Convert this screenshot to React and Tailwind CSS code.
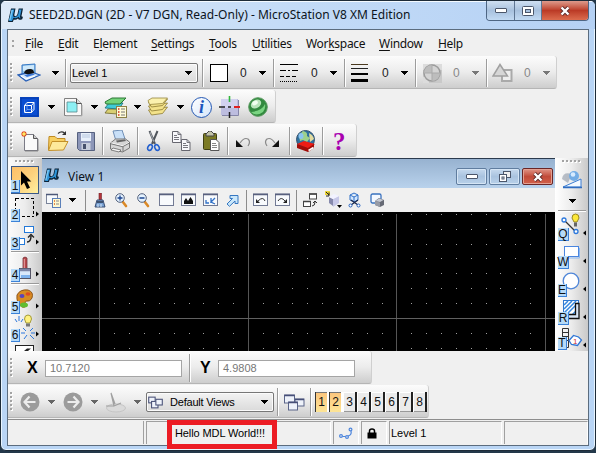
import React from "react";

/* ---------- shared toolbar parts ---------- */

function Grip() {
  return (
    <svg width="4" height="20" className="ml-[2px] mr-[3px] shrink-0" shapeRendering="crispEdges">
      {[0, 4, 8, 12, 16].map((y) => (
        <g key={y}>
          <rect x="1" y={y + 1} width="2" height="2" fill="#fff" />
          <rect x="0" y={y} width="2" height="2" fill="#a3a3a3" />
        </g>
      ))}
    </svg>
  );
}

function GripRow() {
  return (
    <svg width="20" height="4" className="shrink-0" shapeRendering="crispEdges">
      {[0, 4, 8, 12, 16].map((x) => (
        <g key={x}>
          <rect x={x + 1} y="1" width="2" height="2" fill="#fff" />
          <rect x={x} y="0" width="2" height="2" fill="#a3a3a3" />
        </g>
      ))}
    </svg>
  );
}

function Arrow({ className = "", color = "#000" }) {
  return (
    <svg width="7" height="4" viewBox="0 0 7 4" className={"shrink-0 " + className} shapeRendering="crispEdges">
      <path d="M0 0h7v1h-1v1h-1v1h-1v1h-1v-1h-1v-1h-1v-1h-1z" fill={color} />
    </svg>
  );
}

function Sep({ className = "" }) {
  return <div className={"h-7 w-[2px] shrink-0 border-l border-r border-l-[#9c9c9c] border-r-white " + className} />;
}

function Bar({ className = "", children }) {
  return (
    <div className={"flex h-[33px] shrink-0 items-center rounded-r-[3px] border-b border-r border-b-[#b5b5b5] border-r-[#cfcfcf] bg-linear-to-b from-[#fcfcfc] via-[#ececec] to-[#cdcdcd] pt-[2px] " + className}>
      <Grip />
      {children}
    </div>
  );
}

function Icon({ w = 20, h = 20, className = "", children }) {
  return (
    <svg width={w} height={h} viewBox={`0 0 ${w} ${h}`} className={"shrink-0 " + className} fill="none">
      {children}
    </svg>
  );
}

/* ---------- icons ---------- */

function Logo({ className = "" }) {
  return (
    <Icon w={15} h={16} className={className}>
      <path d="M3 1.500h4.500L6.300 8q0 1.300 1.200 1.200q1.500-.2 2-2.200l1.200-5.500H15L13.500 9q0 1 1.500.8l-.8 2.400q-3.700 1.300-4.200-.7q-2 1.700-4.200 1L4.800 15H0z" fill="#0b2236" />
      <path d="M3.500 2.500h2.800L5 8q0 2.500 2 2.300q2.500-.3 3.300-3l.9-4.800h2.300L12 9.500q-.3 1.500 1 1.600q-2.300.6-2.300-1.300Q8 12 5.500 10.800L4 14H1z" fill="#2f94d8" />
      <path d="M3.500 3h1.500L2.500 13H1.200z" fill="#7cc8f2" />
    </Icon>
  );
}

function LevelManagerIcon() {
  return (
    <Icon w={24} h={20}>
      <path d="M5 2l13-1 0 9L5 12z" fill="#8fc3ea" stroke="#3577c4" />
      <path d="M6 3l11-1v4L6 8z" fill="#cfe9fb" />
      <path d="M1 12l13-3 9 3L9 18z" fill="#d5e8fa" stroke="#2b62b8" strokeWidth="1.300" />
      <path d="M7 10q1-4 6-4q4 0 4 4l-5 2z" fill="#111" />
      <path d="M7 12l8-1.500 3 1-8 2.500z" fill="#3b78d8" />
      <path d="M4 13l5 3 9-3" stroke="#fff" />
    </Icon>
  );
}

function LineStyleIcon({ className }) {
  return (
    <Icon w={19} h={20} className={className}>
      <g stroke="#000" shapeRendering="crispEdges">
        <path d="M0 1.500h18" />
        <path d="M0 7.500h18" strokeDasharray="6 2 2 2" />
        <path d="M0 13.500h18" strokeDasharray="4 2" />
        <path d="M0 18.500h18" strokeDasharray="1 1" />
      </g>
    </Icon>
  );
}

function LineWeightIcon({ className }) {
  return (
    <Icon w={18} h={20} className={className}>
      <g fill="#000" shapeRendering="crispEdges">
        <rect y="1" width="17" height="1" fill="#4a3a20" />
        <rect y="5" width="17" height="1" fill="#222" />
        <rect y="10" width="17" height="2" />
        <rect y="16" width="17" height="3" />
      </g>
    </Icon>
  );
}

function TransparencyIcon({ className }) {
  return (
    <Icon className={className}>
      <rect x="1" y="1" width="19" height="19" fill="#c9c9c9" />
      <path d="M1 1h6v6H1zM13 1h7v6h-7zM1 14h6v6H1z" fill="#dcdcdc" />
      <circle cx="10" cy="10" r="8" fill="#d4d4d4" stroke="#9c9c9c" strokeWidth="1.500" />
      <path d="M10 2v8H2a8 8 0 0 1 8-8zM10 10h8a8 8 0 0 1-8 8z" fill="#bdbdbd" />
      <path d="M10 2v16M2 10h16" stroke="#aaa" />
    </Icon>
  );
}

function PriorityIcon({ className }) {
  return (
    <Icon w={21} className={className}>
      <rect x="10" y="7" width="9.500" height="11" fill="#eee" stroke="#aaa" strokeWidth="2" />
      <path d="M8 1.500L15.500 13H1z" fill="#d6d6d6" stroke="#a0a0a0" strokeWidth="1.500" />
    </Icon>
  );
}

function ModelIcon() {
  return (
    <Icon w={19}>
      <rect width="19" height="20" fill="#0b4ed2" />
      <rect x="1" y="1" width="17" height="18" stroke="#0738a4" />
      <path d="M4.500 8.500h7v7h-7zM4.500 8.500l2.500-3h7v7l-2.500 3M11.500 8.500l2.500-3" stroke="#fff" />
      <path d="M7 5.500v7h7M7 12.500l-2.500 3" stroke="#7ea9f5" strokeWidth=".8" />
    </Icon>
  );
}

function ReferenceIcon({ className }) {
  return (
    <Icon w={20} className={className}>
      <path d="M1.500 1.500h12l5 5v12h-17z" fill="#f8f8f8" stroke="#808080" />
      <path d="M3 18.800h16V8" stroke="#aaa" />
      <path d="M4 5h8l2 2v8H4z" fill="#8df0f4" stroke="#56868c" strokeWidth=".8" />
      <path d="M13.500 1.500v5h5" fill="#ddd" stroke="#555" />
    </Icon>
  );
}

function RasterIcon({ className }) {
  return (
    <Icon w={23} h={21} className={className}>
      <path d="M1 16l3-4h12l-3 5z" fill="#d8cf72" stroke="#6d642a" strokeWidth=".8" />
      <path d="M1 11l4-5h14l-4 6z" fill="#40cbd8" stroke="#176875" strokeWidth=".8" />
      <path d="M1 5l7-4h14l-6 6H2z" fill="#74d47b" stroke="#2c7736" />
      <rect x="12.500" y="9.500" width="10" height="11" fill="#fffbd8" stroke="#8c8146" />
      <path d="M14 12h1.500M14 15h1.500M14 18h1.500" stroke="#d33018" strokeWidth="1.500" />
      <path d="M17 12h4M17 15h4M17 18h4" stroke="#777" />
    </Icon>
  );
}

function LevelStackIcon({ className }) {
  return (
    <Icon w={22} h={20} className={className}>
      {[12, 8, 4].map((y) => (
        <path key={y} d={`M1.500 ${y + 1}l7-1.500 12-1.500-5 6.500-11 1.500z`} fill="#f3e28a" stroke="#8b7a32" strokeWidth=".8" />
      ))}
      <path d="M1 3.500l4-2.500 15.500 0-5 5.500-13 1z" fill="#fbf1ae" stroke="#96853c" strokeWidth=".8" />
    </Icon>
  );
}

function InfoIcon({ className }) {
  return (
    <div className={"flex h-[21px] w-[21px] shrink-0 items-center justify-center rounded-full border-[1.500px] border-[#2458b4] bg-linear-to-br from-white to-[#d5e6fa] " + className}>
      <span className="font-['Liberation_Serif',serif] text-[18px] leading-none font-bold text-[#1d56bd] italic">i</span>
    </div>
  );
}

function AccuSnapIcon({ className }) {
  return (
    <Icon w={21} h={22} className={className}>
      <rect x="2" y="3" width="17" height="16" fill="#bdbddf" />
      <rect x="2" y="3" width="16" height="9" fill="#d2d2ef" />
      <path d="M3 19.500h16.500V4" stroke="#8585a8" />
      <path d="M10.500 0v6" stroke="#31b53c" strokeWidth="1.600" />
      <path d="M15 11h6" stroke="#e02020" strokeWidth="1.800" />
      <path d="M0 11h6M10.500 16v6M9 11h3" stroke="#222" strokeWidth="1.500" />
    </Icon>
  );
}

function GreenBallIcon({ className }) {
  return (
    <Icon className={className}>
      <circle cx="10" cy="10" r="9.300" fill="#328a3f" stroke="#5b9a60" />
      <path d="M3 15q5 5 12 0q3-4 2-8q-3 7-14 8z" fill="#7ad482" />
      <ellipse cx="8" cy="7" rx="5.500" ry="4" fill="#b9e4bb" transform="rotate(-30 8 7)" />
      <ellipse cx="7" cy="6" rx="3" ry="2" fill="#f1fff0" transform="rotate(-30 7 6)" />
    </Icon>
  );
}

function NewIcon() {
  return (
    <Icon w={19} h={22}>
      <path d="M4.500 4.500h9l4 4v12h-13z" fill="#fafafa" stroke="#7b7b86" />
      <path d="M5 21h13V9" stroke="#777" strokeWidth=".8" />
      <path d="M13.500 4.500v4h4" fill="#ccc" stroke="#555" />
      <path d="M4 1v6M1 4h6M2 2l4 4M6 2L2 6" stroke="#df3c18" strokeWidth="1.100" />
      <circle cx="4" cy="4" r="1.700" fill="#ffe95e" />
    </Icon>
  );
}

function OpenIcon({ className }) {
  return (
    <Icon w={22} h={22} className={className}>
      <path d="M1.500 20L2 6.500h6l2 2h8V12" fill="#f7cf60" stroke="#bf8a22" />
      <path d="M1.500 20.500L5 11.500h16L16.500 20z" fill="#fde99b" stroke="#c3902a" />
      <path d="M11 3.500q3.500-3 6.500-.5" stroke="#333" strokeWidth="1.200" />
      <path d="M19 1v4h-4z" fill="#333" />
    </Icon>
  );
}

function SaveIcon({ className }) {
  return (
    <Icon w={18} h={19} className={className}>
      <path d="M.5.500h17v18h-15l-2-2z" fill="#8c96b8" stroke="#56617f" />
      <rect x="4" y="1" width="10" height="8" fill="#e8f0fb" />
      <path d="M5 3h8M5 5h8" stroke="#b7c7df" />
      <rect x="4.500" y="11" width="9" height="7" fill="#c8cedc" />
      <rect x="6" y="12" width="3" height="5" fill="#46516c" />
    </Icon>
  );
}

function PrintIcon({ className }) {
  return (
    <Icon w={22} h={23} className={className}>
      <path d="M4 1l9-1 3 9-9 2z" fill="#c9e0f8" stroke="#6f8fb6" />
      <path d="M1.500 13l5-4h10l4 3v6l-7 4-12-3z" fill="#d6d6d6" stroke="#777" />
      <path d="M2 13l12 3 6-3.500" stroke="#fff" />
      <path d="M2 13.800l12 3v5M14 16.500l6.500-3.500" stroke="#777" />
      <path d="M4 18l8 2-2 2-8-2z" fill="#f4f4f4" stroke="#666" strokeWidth=".8" />
      <path d="M7 10.500l9-1 1 1.500-9 1.500z" fill="#666" />
    </Icon>
  );
}

function CutIcon({ className }) {
  return (
    <Icon w={16} h={22} className={className}>
      <path d="M3.500 1l5.500 13M11.500 1L6 14" stroke="#50555c" strokeWidth="2" />
      <path d="M4 2l4 10" stroke="#c8ced6" strokeWidth=".7" />
      <ellipse cx="4" cy="17.500" rx="2.100" ry="3" stroke="#2460ce" strokeWidth="1.600" transform="rotate(25 4 17.500)" />
      <ellipse cx="11" cy="17.500" rx="2.100" ry="3" stroke="#2460ce" strokeWidth="1.600" transform="rotate(-25 11 17.500)" />
    </Icon>
  );
}

function CopyIcon({ className }) {
  return (
    <Icon w={19} h={21} className={className}>
      {[[0, 0], [9, 8]].map(([x, y]) => (
        <g key={x} transform={`translate(${x} ${y})`}>
          <path d="M.500.500h5.500l3 3v8h-8.500z" fill="#f8f8fb" stroke="#66666f" />
          <path d="M6 .5v3h3M2 4.500h3M2 6.500h5M2 8.500h5" stroke="#66666f" strokeWidth=".9" />
        </g>
      ))}
    </Icon>
  );
}

function PasteIcon({ className }) {
  return (
    <Icon w={17} h={21} className={className}>
      <rect x=".5" y="2.500" width="13" height="16" rx="1" fill="#7b7a24" stroke="#3f3f14" />
      <path d="M3 5V3l3-3h2l3 3v2z" fill="#c4c4aa" stroke="#444" />
      <path d="M7.500 8.500h5.500l3 3v8H7.500z" fill="#fff" stroke="#555" />
      <path d="M9 12.500h4M9 14.500h5M9 16.500h5" stroke="#888" />
    </Icon>
  );
}

function CurveArrowIcon({ flip, className }) {
  return (
    <Icon w={17} h={11} className={className}>
      <g transform={flip ? "translate(17 0) scale(-1 1)" : undefined}>
        <path d="M5 6Q9 0 13 2q3 2.500 0 7" stroke="#8a8a8a" strokeWidth="1.200" />
        <path d="M1 3v7h7z" fill="#111" />
      </g>
    </Icon>
  );
}

function GlobeIcon({ className }) {
  return (
    <Icon w={20} h={22} className={className}>
      <circle cx="9.500" cy="9.500" r="9" fill="#2e6f9f" stroke="#34516b" />
      <path d="M7 1q5 1 4 5l3 2-3 4-4-2-3 1q-2-6 3-10z" fill="#9ed08a" />
      <path d="M13 3q4 2 5 6l-4 3z" fill="#e4dca0" />
      <ellipse cx="5" cy="6" rx="2.500" ry="3" fill="#8cc5f0" />
      <path d="M1 14l7-3 11 3-6 5z" fill="#ee1c14" />
      <path d="M1 14v4l11 4v-4zM12 22l6-4v-4l-6 4z" fill="#a00c08" />
      <path d="M12.500 20.500l5-3" stroke="#fff" strokeWidth="1.500" />
    </Icon>
  );
}

function ShareRects({ className = "" }) {
  return (
    <Icon w={21} h={17} className={className}>
      {[[0.5, 1, 10, 8], [11, 5, 9, 7], [4.5, 8, 9, 8]].map(([x, y, w, h], i) => (
        <g key={i}>
          <rect x={x} y={y} width={w} height={h} fill="#eef2fa" stroke="#5a6488" />
          <path d={`M${x} ${y + 0.5}h${w}`} stroke="#474f78" strokeWidth="1.500" />
        </g>
      ))}
    </Icon>
  );
}

/* ---------- view window toolbar icons ---------- */

function ViewAttrIcon() {
  return (
    <Icon w={16} h={15}>
      <rect x=".5" y="1.500" width="11" height="9" fill="#f7fafd" stroke="#7b849a" />
      <path d="M0 1.500h12" stroke="#4c5878" strokeWidth="1.500" />
      <rect x="6.500" y="5.500" width="8" height="9" fill="#fff9d0" stroke="#5b80b9" />
      <path d="M8 8h1M8 11h1" stroke="#d62" strokeWidth="1.500" />
      <path d="M10 8h3M10 11h3" stroke="#888" />
    </Icon>
  );
}

function Broom({ className }) {
  return (
    <Icon w={12} h={15} className={className}>
      <path d="M5 0h2.500v7H5z" fill="#b5343a" stroke="#71222a" strokeWidth=".6" />
      <path d="M3 7h6l2 7H1z" fill="#7aa3d4" stroke="#394c70" />
      <path d="M3 9h6" stroke="#29344e" strokeWidth="1.500" />
      <path d="M4 14v-3M7 14v-3" stroke="#d4e5fa" />
    </Icon>
  );
}

function ZoomIcon({ plus, className }) {
  return (
    <Icon w={13} h={15} className={className}>
      <path d="M7.500 8.500L11 13" stroke="#da8928" strokeWidth="2.600" strokeLinecap="round" />
      <circle cx="5" cy="5" r="4.300" fill="#e4f2ff" stroke="#525f7b" />
      <path d={plus ? "M2.500 5h5M5 2.500v5" : "M2.500 5h5"} stroke="#1a438f" strokeWidth="1.300" />
    </Icon>
  );
}

function FrameIcon({ className = "", children }) {
  return (
    <Icon w={15} h={14} className={className}>
      <rect x=".5" y="1" width="14" height="11.500" fill="#f8fafd" stroke="#727a94" />
      <path d="M0 1.500h15" stroke="#58607e" strokeWidth="1.500" />
      {children}
    </Icon>
  );
}

function PanIcon({ className }) {
  return (
    <Icon w={13} h={13} className={className}>
      <path d="M1 10l5.500-5.500H4V1.500h8v8H9V7L3.500 12.300z" fill="#cae7fa" stroke="#3577c2" />
    </Icon>
  );
}

function CopyViewIcon({ className }) {
  return (
    <Icon w={15} h={15} className={className}>
      <rect x="6.500" y="1" width="7" height="5" fill="#fff" stroke="#444" />
      <rect x=".5" y="8.500" width="7" height="5" fill="#fff" stroke="#444" />
      <path d="M6 1h8M0 8.500h8" stroke="#444" strokeWidth="1.600" />
      <path d="M9 13q3 0 3-4M10 10l2-2 2 2" stroke="#333" />
    </Icon>
  );
}

function RotateIcon({ className }) {
  return (
    <Icon w={18} h={18} className={className}>
      <path d="M4 6l4 2v7l-4-3z" fill="#8689ac" />
      <path d="M8 8l6-3v7l-6 4z" fill="#c7c8e8" />
      <path d="M4 6l5-3 5 2-6 3z" fill="#f2f2ff" />
      <rect x="0" y="0" width="5" height="4" fill="#ecd63a" />
      <path d="M1 1l3 3M4 1.500V5H1" stroke="#222" />
      <path d="M12 14h5l-2.500 3z" fill="#000" />
    </Icon>
  );
}

function ClipVolumeIcon({ className }) {
  return (
    <Icon w={13} h={16} className={className}>
      <path d="M2 3l4-2 4 2v5l-4 2-4-2zM2 3l4 2 4-2M6 5v5" fill="#d0e6ff" stroke="#2f6fc6" />
      <path d="M3 8l7 5M10 8l-7 5" stroke="#1b2b4f" strokeWidth="1.300" />
      <circle cx="2.500" cy="13.500" r="1.500" fill="#fff" stroke="#2460be" />
      <circle cx="10.500" cy="13.500" r="1.500" fill="#fff" stroke="#2460be" />
    </Icon>
  );
}

function ClipMaskIcon({ className }) {
  return (
    <Icon w={15} h={15} className={className}>
      <rect x="1" y="1" width="10" height="9" rx="1.500" fill="#f3f8ff" stroke="#3971bf" strokeWidth="1.300" />
      <path d="M5 8l4-3 5 2v5l-4 2-5-2z" fill="#666a75" />
      <path d="M5 8l5 1.500V14l-5-2z" fill="#979ba6" />
      <path d="M5.500 8L9 5.500 13.500 7 10 9z" fill="#c6cad4" />
    </Icon>
  );
}

/* ---------- palettes down both sides ---------- */

function Tool({ label, active, left, narrow, short, arrow = true, children, className = "" }) {
  return (
    <div
      className={
        "relative w-7 shrink-0 " +
        (short ? "h-[25px] " : "h-7 ") +
        (active ? "border border-[#3d5a86] bg-linear-to-br from-[#fdbf67] via-[#fdd07b] to-[#fff0a0] " : "") +
        className
      }
    >
      <svg width="28" height={short ? 25 : 28} viewBox={short ? "0 0 28 25" : "0 0 28 28"} fill="none" className={active ? "-mt-px -ml-px" : ""}>
        {children}
        {arrow && !active && <path d={left ? "M28 17.500v5l-3-2.500z" : "M25 17.500v5l3-2.500z"} fill="#000" />}
      </svg>
      {label && (
        <span
          className={
            "absolute bottom-0 flex h-[13px] items-center justify-center border-r border-b border-[#3b82d8] bg-[#b5daf8] font-['Liberation_Sans',sans-serif] text-[12px] leading-none text-[#111] " +
            (active ? "-left-px " : "left-0 ") +
            (narrow ? "w-[9px]" : "w-[11px]")
          }
        >
          {label}
        </span>
      )}
    </div>
  );
}

function Divider() {
  return <div className="my-[1px] h-[2px] w-7 shrink-0 border-t border-b border-t-[#9a9a9a] border-b-white" />;
}

function Brush() {
  return (
    <>
      <path d="M12 1q2-2 4 0v11h-4z" fill="#b94a4e" stroke="#76333b" strokeWidth=".8" />
      <path d="M13.300 2v9" stroke="#e8a4a6" />
      <rect x="8.500" y="11.500" width="11" height="10" fill="#d9e8fa" stroke="#556" />
      <path d="M9 13h10" stroke="#7c85a6" strokeWidth="2.500" />
      <path d="M10 21h9v-3h-9z" fill="#7fb3ee" />
    </>
  );
}

function LeftPalette() {
  return (
    <div className="flex h-[193px] w-[34px] shrink-0 flex-col items-center overflow-hidden bg-linear-to-r from-[#fbfbfb] via-[#ececec] to-[#c9c9c9] pt-[2px] pr-[3px] pl-[3px]">
      <GripRow />
      <Tool label="1" active narrow className="mt-[2px]">
        <path d="M10 5v14.500l3-3 3 6.500 3-1.300-3-6.200h4.300z" fill="#000" />
      </Tool>
      <Tool label="2" narrow>
        <rect x="4.500" y="4.500" width="18" height="18" stroke="#000" strokeDasharray="3 2" shapeRendering="crispEdges" />
      </Tool>
      <Tool label="3" narrow>
        <rect x="13.500" y="4.500" width="9" height="6" fill="#fff" stroke="#2479d8" />
        <rect x="5.500" y="16.500" width="8" height="6" fill="#fff" stroke="#2479d8" />
        <path d="M16 20q4 0 4-6M17 15.500l3-3 3 3" stroke="#222" strokeWidth="1.400" />
      </Tool>
      <Divider />
      <Tool label="4" narrow>
        <g transform="translate(0 3)"><Brush /></g>
      </Tool>
      <Divider />
      <Tool label="5" narrow>
        <path d="M6 9q3-6 11-5q6 2 4 8q-2 4-5 3q-3 0-1 3q1 4-4 3q-6-4-5-12z" fill="#d88b22" stroke="#90561c" />
        <ellipse cx="11" cy="10" rx="2.500" ry="2" fill="#5c45ba" />
        <ellipse cx="17" cy="8" rx="2.500" ry="1.800" fill="#e04a20" />
        <ellipse cx="13" cy="19" rx="4" ry="2.500" fill="#60bd30" />
      </Tool>
      <Tool label="6" narrow>
        <g stroke="#2c77dc">
          <path d="M8 2v5M4 5l2 3M12 5l-2 3M10 19h4M20 19h4M12 14l3 3M22 14l-3 3M13 25l3-4M23 25l-4-4" />
        </g>
        <path d="M13.500 5q0-4 3.500-4t3.500 4l-1.500 4h-4z" fill="#fff27f" stroke="#a49b39" />
        <path d="M15 9.500h4v3h-4z" fill="#777" />
      </Tool>
      <Tool arrow={false}>
        <rect x="4.500" y="3.500" width="18" height="14" fill="#fff" stroke="#222" />
        <path d="M13 9l3-2.500h4L17 9z" fill="#222" />
      </Tool>
    </div>
  );
}

function RightPalette() {
  return (
    <div className="flex h-[193px] w-[33px] shrink-0 flex-col items-center overflow-hidden bg-linear-to-r from-[#ffffff] via-[#ececec] to-[#c9c9c9] pt-[2px] pr-[2px] pl-[3px]">
      <GripRow />
      <Icon w={22} h={20} className="mt-[6px]">
        <path d="M1 9Q2 1 11 4l-4 9z" fill="#8e98a6" opacity=".6" />
        <circle cx="13" cy="6" r="5" fill="#74ade5" />
        <circle cx="12" cy="4.500" r="2.300" fill="#d6ebff" />
        <path d="M2 17L20 9v8z" fill="#f3f9ff" stroke="#3a7dd4" />
        <path d="M2 17.500h19" stroke="#2f6cc0" strokeWidth="1.500" />
      </Icon>
      <Arrow className="mt-[9px] mb-[6px]" />
      <Divider />
      <Tool label="Q" left>
        <path d="M6 7l11 11" stroke="#333" strokeWidth="1.300" />
        <circle cx="6" cy="7" r="2" fill="#fff" stroke="#2c78dc" strokeWidth="1.300" />
        <circle cx="18" cy="18.500" r="2" fill="#fff" stroke="#2c78dc" strokeWidth="1.300" />
        <path d="M14 5q0-4 3.500-4T21 5l-2 4h-3z" fill="#fce83a" stroke="#998922" />
        <path d="M16 9.500h3v4h-3z" fill="#666" />
      </Tool>
      <Tool label="W" left>
        <rect x="6.500" y="5.500" width="14" height="10" fill="#fff" stroke="#4a86e0" />
        <path d="M21.500 7v10H8" stroke="#8fb9ee" />
      </Tool>
      <Tool label="E" narrow left>
        <circle cx="13" cy="12" r="7.800" fill="#fff" stroke="#4f86d8" strokeWidth="1.300" />
      </Tool>
      <Tool label="R" left>
        <rect x="5.500" y="3.500" width="15" height="18" fill="#fff" stroke="#2f78d0" />
        <path d="M6 8l4-4M6 12l8-8M6 16l12-12M6 20L20 6M11 21L20 12M16 21l4-4" stroke="#3688df" strokeWidth="1.500" />
        <path d="M17.500 6.500h3.500v15h-11v-4h7.500z" fill="#d9e5f4" stroke="#111" strokeWidth="1.300" />
      </Tool>
      <Tool label="T" narrow left short>
        <path d="M4.500 3.500h6v19h-6zM4 7.500h7M4 11.500h7M4 15.500h7" stroke="#333" />
        <path d="M12.500 15.500l4.500-5 5 1.500 3 3-4 5.500-6-1z" fill="#fff" stroke="#3077d6" strokeWidth="1.300" transform="translate(-1.500 0)" />
        <text x="15" y="18.500" fontSize="8" fontFamily="Liberation Sans" fill="#c33">1</text>
      </Tool>
    </div>
  );
}

/* ---------- drawing view ---------- */

const steps = Array.from({ length: 40 }, (_, i) => i - 8);

function DrawingArea() {
  const xs = steps.map((k) => [k, Math.round(99.4 + 14.85 * k) - 42]).filter(([, x]) => x >= 5 && x < 513);
  const ys = steps.map((k) => [k, Math.round(317.8 + 14.85 * k) - 212]).filter(([, y]) => y >= 0 && y < 139);
  return (
    <svg width="513" height="139" className="block bg-black" shapeRendering="crispEdges">
      {xs.map(([i, x]) =>
        i % 10 === 0 ? (
          <rect key={i} x={x} y="2" width="1" height="137" fill="#555" />
        ) : (
          ys.map(([j, y]) => j !== 0 && <rect key={i + "," + j} x={x} y={y} width="1" height="1" fill="#a0a0a0" />)
        )
      )}
      <rect x="0" y="106" width="513" height="1" fill="#606060" />
    </svg>
  );
}

function CloseGlyph() {
  return (
    <Icon w={12} h={10}>
      <path d="M2.500 1.500l7 7M9.500 1.500l-7 7" stroke="#5b2a2a" strokeWidth="4" />
      <path d="M2.500 1.500l7 7M9.500 1.500l-7 7" stroke="#fff" strokeWidth="2.400" />
    </Icon>
  );
}

function MinGlyph() {
  return (
    <Icon w={12} h={5}>
      <rect x=".5" y=".5" width="11" height="4" rx=".5" fill="#fff" stroke="#4b566a" />
    </Icon>
  );
}

function ViewWindow() {
  const btn = "flex h-[17px] w-[31px] items-center justify-center rounded-[2px] border border-[#607d9f] bg-linear-to-b from-[#c7daee] via-[#a9c3df] to-[#b9d1ea] shadow-[inset_0_0_0_1px_#d5e5f5]";
  return (
    <div className="h-[193px] w-[513px] shrink-0">
      <div className="flex h-[30px] items-center border-t border-[#2b3a4d] bg-linear-to-b from-[#97b2d0] to-[#b9d2ec]">
        <Logo className="mt-[3px] ml-[2px]" />
        <span className="mt-[7px] ml-[9px] w-[60px] font-['Noto_Sans',sans-serif] text-[12px] leading-none whitespace-pre text-[#0c1420]">View 1</span>
        <div className="mt-[6px] mr-[2px] ml-auto flex gap-[2px]">
          <div className={btn}><MinGlyph /></div>
          <div className={btn}>
            <Icon w={12} h={11}>
              <rect x="4.500" y=".5" width="7" height="6" fill="#eee" stroke="#4b566a" />
              <rect x=".5" y="3.500" width="7" height="7" fill="#fff" stroke="#4b566a" />
              <rect x="3" y="6" width="2" height="2" stroke="#4b566a" />
            </Icon>
          </div>
          <div className="flex h-[17px] w-[31px] items-center justify-center rounded-[2px] border border-[#6b2626] bg-linear-to-b from-[#df9487] via-[#c14a39] to-[#d2604a] shadow-[inset_0_0_0_1px_#e3a092]"><CloseGlyph /></div>
        </div>
      </div>
      <div className="flex h-6 items-center bg-[#f0f0f0]">
        <div className="ml-1"><ViewAttrIcon /></div>
        <Arrow className="ml-[7px]" />
        <div className="ml-[9px] h-[21px] w-px bg-[#8c8c8c]" />
        <Broom className="ml-2" />
        <ZoomIcon plus className="ml-[9px]" />
        <ZoomIcon className="ml-[9px]" />
        <FrameIcon className="ml-[9px]" />
        <FrameIcon className="ml-[7px]"><path d="M3 11V8l2-3 2 3 2.500-4L12 8v3z" fill="#111" /></FrameIcon>
        <FrameIcon className="ml-[7px]"><path d="M3 7v3h3M8 5v5M12 5L8 9l4 2" stroke="#3171c7" strokeWidth="1.300" /></FrameIcon>
        <PanIcon className="ml-[8px]" />
        <div className="ml-[7px] h-[21px] w-px bg-[#8c8c8c]" />
        <FrameIcon className="ml-[6px]"><path d="M5 8q5-5 7 0" stroke="#333" /><path d="M3 6v4h4z" fill="#222" /></FrameIcon>
        <FrameIcon className="ml-[7px]"><path d="M3 8q3-5 7 0" stroke="#333" /><path d="M12 6v4H8z" fill="#222" /></FrameIcon>
        <div className="ml-[6px] h-[21px] w-px bg-[#8c8c8c]" />
        <CopyViewIcon className="ml-[6px]" />
        <RotateIcon className="ml-[7px]" />
        <ClipVolumeIcon className="ml-[5px]" />
        <ClipMaskIcon className="ml-[9px]" />
      </div>
      <DrawingArea />
    </div>
  );
}

/* ---------- text parts ---------- */

function MenuItem({ pre = "", hot, post = "", className }) {
  return (
    <span className={"shrink-0 whitespace-pre " + className}>
      {pre}
      <span className="underline decoration-1 underline-offset-2">{hot}</span>
      {post}
    </span>
  );
}

function Zero({ className = "text-[#222]" }) {
  return <span className={"w-[7px] shrink-0 font-['Liberation_Sans',sans-serif] text-[12px] leading-none " + className}>0</span>;
}

function NavIcon({ flip, className = "" }) {
  return (
    <Icon className={className}>
      <g transform={flip ? "translate(20 0) scale(-1 1)" : undefined}>
        <circle cx="10" cy="10" r="9.500" fill="#9b9b9b" />
        <path d="M4.500 10h11M9.500 4.500L4.500 10l5 5.500" stroke="#ececec" strokeWidth="2.200" />
      </g>
    </Icon>
  );
}

function ViewToggle({ n, on }) {
  return (
    <div
      className={
        "flex h-[20px] w-[14px] shrink-0 items-center justify-center border-r-2 font-['Liberation_Sans',sans-serif] text-[12px] leading-none text-[#111] " +
        (on
          ? "border-r-white border-l border-l-[#333] bg-linear-to-b from-[#fbc47c] to-[#fde597] shadow-[inset_0_1px_0_#777]"
          : "border-r-[#222] border-l border-l-white bg-[#ebebeb] shadow-[inset_0_1px_0_#fff,inset_0_-1px_0_#999]")
      }
    >
      {n}
    </div>
  );
}

function StatusPane({ className = "", children }) {
  return (
    <div className={"flex h-[23px] shrink-0 items-center border-t border-r border-l border-t-[#a0a0a0] border-r-white border-l-[#a0a0a0] whitespace-pre " + className}>
      {children}
    </div>
  );
}

export default function App() {
  const cap = "flex h-[19px] items-center justify-center";
  return (
    <div className="flex h-[453px] w-[596px] flex-col overflow-hidden bg-[#23384a] font-['Liberation_Sans',sans-serif] text-[11px] text-black">
      <div className="h-[451px] w-[596px] overflow-hidden rounded-t-[6px] rounded-b-[6px] border border-[#1d2b38] bg-[#b9d5f5] shadow-[inset_0_0_0_1px_#e9f5ff]">
        {/* caption */}
        <div className="flex h-[28px] items-start bg-linear-to-r from-[#dce9f7] via-[#c3dbf7] to-[#b5d1f4] shadow-[inset_0_1px_0_#f4faff]">
          <Logo className="mt-[6px] ml-[7px]" />
          <span className="mt-[7px] ml-[6px] font-['Noto_Sans',sans-serif] text-[12px] leading-[14px] tracking-[0.02px] whitespace-pre text-[#0c1420]">
            SEED2D.DGN (2D - V7 DGN, Read-Only) - MicroStation V8 XM Edition
          </span>
          <div className="mr-[6px] ml-auto flex overflow-hidden rounded-b-[4px] border border-t-0 border-[#4e6684]">
            <div className={cap + " w-[28px] border-r border-[#5f7693] bg-linear-to-b from-[#cfdff1] via-[#a8c1de] to-[#c2daf3]"}><MinGlyph /></div>
            <div className={cap + " w-[27px] border-r border-[#5f7693] bg-linear-to-b from-[#cfdff1] via-[#a8c1de] to-[#c2daf3]"}>
              <Icon w={12} h={10}>
                <rect x=".5" y=".5" width="11" height="9" rx="1" fill="#fff" stroke="#4b566a" />
                <rect x="3.500" y="3.500" width="5" height="3" fill="#a8c1de" stroke="#4b566a" />
              </Icon>
            </div>
            <div className={cap + " w-[46px] bg-linear-to-b from-[#dc9a8c] via-[#bb3a26] to-[#dc6c4e]"}><CloseGlyph /></div>
          </div>
        </div>

        {/* client area */}
        <div className="ml-[6px] flex h-[417px] w-[582px] flex-col border border-[#5b6c7e] bg-[#f0f0f0]">
          <div className="flex h-[26px] shrink-0 items-center pt-px font-['Noto_Sans',sans-serif] text-[12px] leading-none tracking-[-0.3px] text-[#111]">
            <svg width="2" height="7" className="ml-[4px]" shapeRendering="crispEdges"><path d="M0 0h2v2H0zM0 5h2v2H0z" fill="#a3a3a3" /></svg>
            <MenuItem hot="F" post="ile" className="ml-[11px] w-[33px]" />
            <MenuItem hot="E" post="dit" className="w-[35px]" />
            <MenuItem pre="E" hot="l" post="ement" className="w-[58px]" />
            <MenuItem hot="S" post="ettings" className="w-[58px]" />
            <MenuItem hot="T" post="ools" className="w-[43px]" />
            <MenuItem hot="U" post="tilities" className="w-[54px]" />
            <MenuItem pre="Wor" hot="k" post="space" className="w-[73px]" />
            <MenuItem hot="W" post="indow" className="w-[59px]" />
            <MenuItem hot="H" post="elp" className="w-[30px]" />
          </div>

          {/* attributes */}
          <Bar className="mb-px w-[549px]">
            <LevelManagerIcon />
            <Arrow className="ml-[11px]" />
            <Sep className="ml-[6px]" />
            <div className="ml-[3px] flex h-[20px] w-[128px] shrink-0 items-center rounded-[2px] border border-[#777] bg-linear-to-b from-[#f3f3f3] to-[#dadada] shadow-[inset_0_0_0_1px_#fbfbfb]">
              <span className="ml-[1px] leading-none">Level 1</span>
              <Arrow className="mr-[5px] ml-auto" />
            </div>
            <Sep className="ml-[4px]" />
            <div className="ml-[6px] h-[18px] w-[18px] shrink-0 border border-black bg-white" />
            <Zero className="ml-[12px] text-[#222]" />
            <Arrow className="ml-[12px]" />
            <Sep className="ml-[7px]" />
            <LineStyleIcon className="ml-[5px]" />
            <Zero className="ml-[12px] text-[#222]" />
            <Arrow className="ml-[12px]" />
            <Sep className="ml-[7px]" />
            <LineWeightIcon className="ml-[5px]" />
            <Zero className="ml-[13px] text-[#222]" />
            <Arrow className="ml-[12px]" />
            <Sep className="ml-[7px]" />
            <TransparencyIcon className="ml-[5px]" />
            <Zero className="ml-[11px] text-[#888]" />
            <Arrow className="ml-[12px]" color="#777" />
            <Sep className="ml-[7px]" />
            <PriorityIcon className="ml-[4px]" />
            <Zero className="ml-[11px] text-[#888]" />
            <Arrow className="ml-[12px]" color="#777" />
          </Bar>

          {/* primary tools */}
          <Bar className="mb-px w-[268px]">
            <div className="ml-[3px]"><ModelIcon /></div>
            <Arrow className="ml-[9px]" />
            <ReferenceIcon className="ml-[8px]" />
            <Arrow className="ml-[8px]" />
            <RasterIcon className="ml-[6px]" />
            <Arrow className="ml-[7px]" />
            <LevelStackIcon className="ml-[6px]" />
            <Arrow className="ml-[8px]" />
            <InfoIcon className="ml-[7px]" />
            <AccuSnapIcon className="ml-[7px]" />
            <GreenBallIcon className="ml-[8px]" />
          </Bar>

          {/* standard */}
          <Bar className="mb-px w-[349px]">
            <div className="ml-[3px]"><NewIcon /></div>
            <OpenIcon className="ml-[8px]" />
            <SaveIcon className="ml-[8px]" />
            <Sep className="ml-[7px]" />
            <PrintIcon className="ml-[5px]" />
            <Sep className="ml-[6px]" />
            <CutIcon className="ml-[7px]" />
            <CopyIcon className="ml-[10px]" />
            <PasteIcon className="ml-[12px]" />
            <Sep className="ml-[7px]" />
            <CurveArrowIcon className="mt-[2px] ml-[6px]" />
            <CurveArrowIcon flip className="mt-[2px] ml-[11px]" />
            <Sep className="ml-[9px]" />
            <GlobeIcon className="ml-[5px]" />
            <Sep className="ml-[6px]" />
            <span className="ml-[9px] font-['Liberation_Serif',serif] text-[25px] leading-none font-bold text-[#a800b0]">?</span>
          </Bar>

          <div className="flex h-[193px] shrink-0">
            <LeftPalette />
            <ViewWindow />
            <RightPalette />
          </div>

          {/* coordinates */}
          <Bar className="mb-px w-[364px]">
            <span className="ml-[10px] w-[18px] text-[16px] leading-none font-bold">X</span>
            <div className="flex h-[17px] w-[137px] items-center border border-[#a5a5a5] bg-white pl-[4px] leading-none text-[#777]">10.7120</div>
            <Sep className="ml-[7px]" />
            <span className="ml-[9px] w-[18px] text-[16px] leading-none font-bold">Y</span>
            <div className="flex h-[17px] w-[137px] items-center border border-[#a5a5a5] bg-white pl-[4px] leading-none text-[#777]">4.9808</div>
          </Bar>

          {/* view groups */}
          <Bar className="w-[421px]">
            <NavIcon className="ml-[3px]" />
            <Arrow className="ml-[8px]" color="#666" />
            <NavIcon flip className="ml-[8px]" />
            <Arrow className="ml-[8px]" color="#666" />
            <Icon w={21} h={21} className="ml-[7px]">
              <ellipse cx="11" cy="16" rx="9.500" ry="4" fill="#dadada" stroke="#c4c4c4" />
              <path d="M6 1l3 13 7-3M9 14l-8 0M6 1l4 11" stroke="#a0a0a0" strokeWidth="1.200" />
            </Icon>
            <Arrow className="ml-[8px]" color="#666" />
            <div className="ml-[5px] flex h-[20px] w-[128px] shrink-0 items-center rounded-[2px] border border-[#777] bg-linear-to-b from-[#f3f3f3] to-[#dadada] shadow-[inset_0_0_0_1px_#fbfbfb]">
              <svg width="15" height="13" viewBox="0 0 21 17" className="ml-[1px]" fill="#eef2fa" stroke="#4a5278" strokeWidth="1.500">
                <rect x="1" y="1" width="9" height="8" /><rect x="5" y="7" width="9" height="9" /><rect x="11" y="4" width="9" height="8" />
              </svg>
              <span className="ml-[7px] leading-none tracking-[-0.2px] whitespace-pre">Default Views</span>
              <Arrow className="mr-[5px] ml-auto" />
            </div>
            <Sep className="ml-[3px]" />
            <ShareRects className="ml-[5px]" />
            <Sep className="ml-[5px]" />
            <div className="ml-[3px] flex">
              {[1, 2, 3, 4, 5, 6, 7, 8].map((n) => (
                <ViewToggle key={n} n={n} on={n < 3} />
              ))}
            </div>
          </Bar>

          {/* status bar */}
          <div className="mt-px flex h-[26px] shrink-0 items-start gap-[2px] border-t border-[#8d8d8d] pt-px leading-none">
            <div className="h-[23px] w-[136px] shrink-0 border-r border-[#a0a0a0]" />
            <StatusPane className="w-[185px]">
              <div className="mt-[2px] ml-[20px] flex h-[29px] w-[110px] shrink-0 items-center border-[5px] border-[#ec1c24] pb-[2px] pl-[3px] tracking-[-0.1px]">Hello MDL World!!!</div>
            </StatusPane>
            <StatusPane className="w-[26px] justify-center">
              <svg width="14" height="13" viewBox="0 0 14 13" fill="none" stroke="#4e86dc" strokeWidth="1.200">
                <circle cx="2" cy="9" r="1.400" /><circle cx="8" cy="10" r="1.400" /><circle cx="11.500" cy="2.500" r="1.400" />
                <path d="M3.500 9.500h3M9 9q4-1 3-5" />
              </svg>
            </StatusPane>
            <StatusPane className="w-[26px] pl-[5px]">
              <svg width="10" height="11" viewBox="0 0 10 11"><path d="M2.500 5V3q0-2 2.500-2t2.500 2v2" fill="none" stroke="#000" strokeWidth="1.500" /><rect x=".5" y="4.500" width="9" height="6" fill="#000" /></svg>
            </StatusPane>
            <StatusPane className="w-[113px] pl-[1px]">Level 1</StatusPane>
            <StatusPane className="grow" />
          </div>
        </div>
      </div>
    </div>
  );
}
